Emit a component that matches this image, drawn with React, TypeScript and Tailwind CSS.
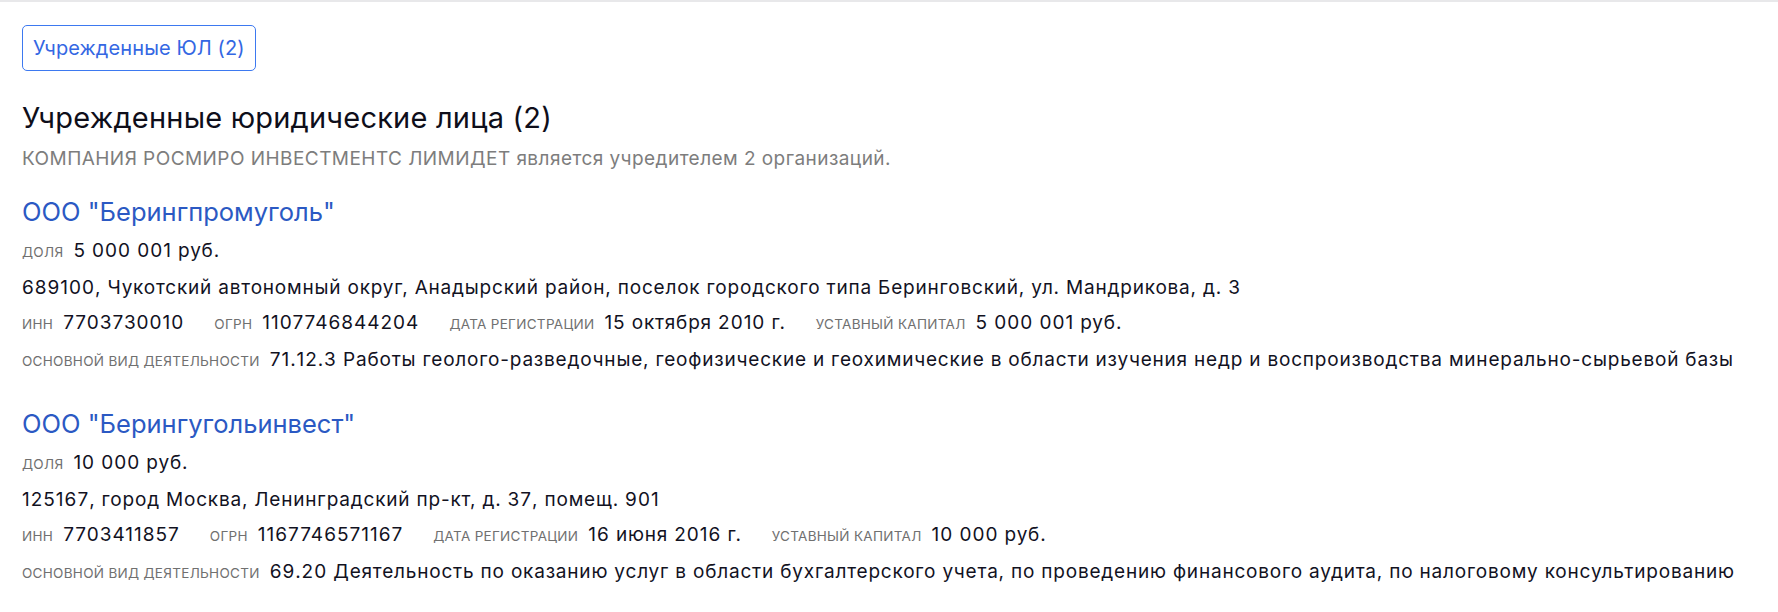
import React from 'react';

type Company = {
  id: number;
  name: string;
  share: string;
  address: string;
  inn: string;
  ogrn: string;
  regDate: string;
  capital: string;
  activity: string;
};

const companies: Company[] = [
  {
    id: 1,
    name: 'ООО "Берингпромуголь"',
    share: '5 000 001 руб.',
    address:
      '689100, Чукотский автономный округ, Анадырский район, поселок городского типа Беринговский, ул. Мандрикова, д. 3',
    inn: '7703730010',
    ogrn: '1107746844204',
    regDate: '15 октября 2010 г.',
    capital: '5 000 001 руб.',
    activity:
      '71.12.3 Работы геолого-разведочные, геофизические и геохимические в области изучения недр и воспроизводства минерально-сырьевой базы',
  },
  {
    id: 2,
    name: 'ООО "Берингугольинвест"',
    share: '10 000 руб.',
    address: '125167, город Москва, Ленинградский пр-кт, д. 37, помещ. 901',
    inn: '7703411857',
    ogrn: '1167746571167',
    regDate: '16 июня 2016 г.',
    capital: '10 000 руб.',
    activity:
      '69.20 Деятельность по оказанию услуг в области бухгалтерского учета, по проведению финансового аудита, по налоговому консультированию',
  },
];

// digits in the source font are a bit wider than Inter's
const Txt = ({ text }: { text: string }) => (
  <>
    {text.split(/(\d+)/).map((part, i) =>
      /\d/.test(part) ? (
        <span key={i} className="tracking-[1px]">
          {part}
        </span>
      ) : (
        part
      )
    )}
  </>
);

const Label = ({ children }: { children: React.ReactNode }) => (
  <span className="text-[13.5px] tracking-[0.3px] uppercase text-[#707070] mr-[10px]">{children}</span>
);

const Field = ({ label, value }: { label: string; value: string }) => (
  <span className="mr-[30px] whitespace-nowrap">
    <Label>{label}</Label>
    <Txt text={value} />
  </span>
);

const App = () => {
  return (
    <div className="min-h-screen bg-white font-['Inter',sans-serif] text-[#12121f]">
      <div className="h-[2px] bg-[#e8e8ea]" />
      <div className="px-[22px]">
        <button className="mt-[23px] h-[46px] px-[10px] border border-[#3d79f0] rounded-[5px] text-[20px] tracking-[0.1px] text-[#3467e3]">
          Учрежденные ЮЛ (2)
        </button>

        <h2 className="mt-[29px] text-[29px] tracking-[0.2px] leading-[36px] text-[#0e0e1a]">
          Учрежденные юридические лица (2)
        </h2>
        <p className="mt-[11px] text-[19px] tracking-[0.45px] leading-[24px] text-[#7d7d7d]">
          КОМПАНИЯ РОСМИРО ИНВЕСТМЕНТС ЛИМИДЕТ является учредителем 2 организаций.
        </p>

        <div className="mt-[24px] space-y-[28px]">
          {companies.map((c) => (
            <div key={c.id} className="text-[19px] tracking-[0.8px] leading-[35px]">
              <a className="block text-[25.5px] tracking-normal leading-[34px] text-[#2b59c3]">{c.name}</a>
              <div className="mt-[4px]">
                <Label>доля</Label>
                <Txt text={c.share} />
              </div>
              <div>
                <Txt text={c.address} />
              </div>
              <div>
                <Field label="инн" value={c.inn} />
                <Field label="огрн" value={c.ogrn} />
                <Field label="дата регистрации" value={c.regDate} />
                <Field label="уставный капитал" value={c.capital} />
              </div>
              <div>
                <Label>основной вид деятельности</Label>
                <Txt text={c.activity} />
              </div>
            </div>
          ))}
        </div>
      </div>
    </div>
  );
};

export default App;
